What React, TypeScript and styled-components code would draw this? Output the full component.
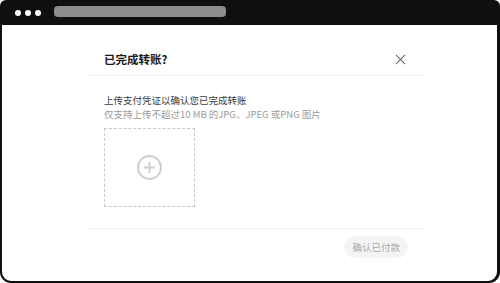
import React from 'react'
import styled, { createGlobalStyle } from 'styled-components'

const Global = createGlobalStyle`
  html, body { margin: 0; padding: 0; background: #fff; }
  body { font-family: "Noto Sans CJK SC", "Noto Sans", sans-serif; }
`

const Frame = styled.div`
  width: 500px;
  height: 283px;
  box-sizing: border-box;
  background: #0f0f0f;
  border-radius: 6px 6px 11px 11px;
  padding: 0 3px 2px 2px;
  display: flex;
  flex-direction: column;
`

const TopBar = styled.div`
  height: 25px;
  display: flex;
  align-items: center;
  padding-left: 13px;
  gap: 13px;
`

const Dots = styled.div`
  display: flex;
  gap: 4px;
`

const Dot = styled.span`
  width: 6px;
  height: 6px;
  border-radius: 50%;
  background: #fff;
`

const UrlBar = styled.div`
  width: 172px;
  height: 11px;
  border-radius: 4px;
  background: #8c8c8c;
  margin-top: -2px;
`

const Page = styled.div`
  flex: 1;
  background: #fff;
  border-radius: 0 0 9px 9px;
  padding-top: 18px;
  padding-left: 86px;
  overflow: hidden;
`

const Modal = styled.div`
  width: 337px;
  background: #fff;
  display: flex;
  flex-direction: column;
`

const Header = styled.div`
  height: 32px;
  display: flex;
  align-items: center;
  justify-content: space-between;
  padding: 0 19px 0 16px;
  border-bottom: 1px solid #f1f1f1;
  background: linear-gradient(#fff, #fff) top center / 80px 1px no-repeat, #fff;
`

const Title = styled.div`
  font-size: 11.5px;
  font-weight: 700;
  color: #1a1a1a;
`

const Close = styled.svg`
  width: 11px;
  height: 11px;
`

const Body = styled.div`
  padding: 17px 16px 21px;
  border-bottom: 1px solid #f1f1f1;
`

const Line = styled.div<{ $muted?: boolean }>`
  font-size: 9.5px;
  line-height: 14px;
  color: ${p => (p.$muted ? '#9a9a9a' : '#3a3a3a')};
`

const Upload = styled.div`
  margin-top: 7px;
  width: 91px;
  height: 79px;
  box-sizing: border-box;
  border: 1px dashed #c8c8c8;
  display: flex;
  align-items: center;
  justify-content: center;
`

const Footer = styled.div`
  display: flex;
  justify-content: flex-end;
  padding: 7px 17px 0;
`

const Button = styled.div`
  height: 22px;
  padding: 0 8px;
  border-radius: 11px;
  background: #f4f4f4;
  color: #a8a8a8;
  font-size: 9.5px;
  display: flex;
  align-items: center;
`

export default function App() {
  return (
    <>
      <Global />
      <Frame>
        <TopBar>
          <Dots>
            <Dot />
            <Dot />
            <Dot />
          </Dots>
          <UrlBar />
        </TopBar>
        <Page>
          <Modal>
            <Header>
              <Title>已完成转账?</Title>
              <Close viewBox="0 0 12 12">
                <path d="M1 1L11 11M11 1L1 11" stroke="#666" strokeWidth="1.1" fill="none" />
              </Close>
            </Header>
            <Body>
              <Line>上传支付凭证以确认您已完成转账</Line>
              <Line $muted>仅支持上传不超过10 MB 的JPG、JPEG 或PNG 图片</Line>
              <Upload>
                <svg width="27" height="27" viewBox="0 0 27 27">
                  <circle cx="13.5" cy="13.5" r="11.5" stroke="#cfcfcf" strokeWidth="2" fill="none" />
                  <path d="M13.5 8V19M8 13.5H19" stroke="#cfcfcf" strokeWidth="2" fill="none" />
                </svg>
              </Upload>
            </Body>
            <Footer>
              <Button>确认已付款</Button>
            </Footer>
          </Modal>
        </Page>
      </Frame>
    </>
  )
}
